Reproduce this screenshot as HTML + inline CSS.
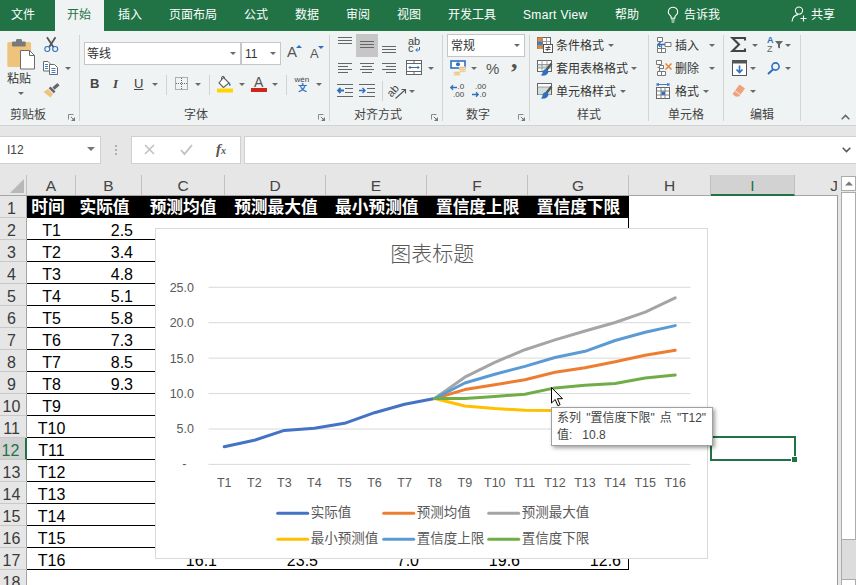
<!DOCTYPE html>
<html lang="zh-CN">
<head>
<meta charset="utf-8">
<title>Excel</title>
<style>
html,body{margin:0;padding:0;}
body{width:856px;height:585px;overflow:hidden;position:relative;background:#e6e6e6;font-family:"Liberation Sans","Noto Sans CJK SC",sans-serif;font-size:12px;color:#262626;}
.abs,.abs *{position:absolute;}
div{box-sizing:border-box;}
.t{position:absolute;white-space:nowrap;line-height:16px;height:16px;}
.c{transform:translateX(-50%);}
#tabs{position:absolute;left:0;top:0;width:856px;height:31px;background:#217346;}
#tabs .t{color:#fff;font-size:12px;top:7px;}
#acttab{position:absolute;left:55px;top:0;width:49px;height:31px;background:#f0f3f3;}
#ribbon{position:absolute;left:0;top:31px;width:856px;height:94px;background:#f0f3f3;}
#ribline{position:absolute;left:0;top:125px;width:856px;height:1px;background:#d2d2d2;}
.gsep{position:absolute;top:35px;width:1px;height:86px;background:#d4d4d4;}
.ssep{position:absolute;width:1px;height:20px;background:#d4d4d4;}
.glabel{position:absolute;top:107px;font-size:12px;line-height:16px;color:#444;transform:translateX(-50%);white-space:nowrap;}
.arr{position:absolute;width:0;height:0;border-left:3px solid transparent;border-right:3px solid transparent;border-top:3px solid #555;}
.box{position:absolute;background:#fff;border:1px solid #c6c6c6;}
.rt{position:absolute;font-size:12px;line-height:16px;white-space:nowrap;color:#333;}
svg{position:absolute;overflow:visible;}
.hdr{position:absolute;top:175px;height:20px;font-size:15.500px;line-height:22px;text-align:center;color:#444;border-right:1px solid #c0c0c0;}
.rh{position:absolute;left:0;width:27px;height:22px;font-size:16px;line-height:25px;text-align:center;padding-right:4px;color:#3a3a3a;border-bottom:1px solid #c8c8c8;}
.cell{position:absolute;height:22px;font-size:16px;line-height:25px;color:#000;text-align:center;white-space:nowrap;}
.h1{color:#fff;font-weight:bold;font-size:16.700px;line-height:23px;}
.hl{position:absolute;left:27px;width:602px;height:1px;background:#000;}
</style>
</head>
<body>

<div id="tabs">
<div id="acttab"></div>
<span class="t" style="left:11px">文件</span>
<span class="t" style="left:67px;color:#217346">开始</span>
<span class="t" style="left:118px">插入</span>
<span class="t" style="left:169px">页面布局</span>
<span class="t" style="left:244px">公式</span>
<span class="t" style="left:295px">数据</span>
<span class="t" style="left:346px">审阅</span>
<span class="t" style="left:397px">视图</span>
<span class="t" style="left:448px">开发工具</span>
<span class="t" style="letter-spacing:.35px;left:523px">Smart View</span>
<span class="t" style="left:615px">帮助</span>
<span class="t" style="left:684px">告诉我</span>
<span class="t" style="left:811px">共享</span>
<svg style="left:666px;top:6px" width="14" height="18" viewBox="0 0 14 18"><path d="M7 1.2a4.6 4.6 0 0 0-2.6 8.4c.5.5.8 1.2.8 2v.6h3.6v-.6c0-.8.3-1.5.8-2A4.6 4.6 0 0 0 7 1.200z" fill="none" stroke="#fff" stroke-width="1.1"/><path d="M5.2 14h3.600M5.600 16h2.800" stroke="#fff" stroke-width="1.100"/></svg>
<svg style="left:791px;top:6px" width="17" height="17" viewBox="0 0 17 17"><circle cx="8" cy="4.600" r="3.600" fill="none" stroke="#fff" stroke-width="1.100"/><path d="M1 15.500c.4-4 3-6.500 6-6.900" fill="none" stroke="#fff" stroke-width="1.100"/><path d="M12.500 9.500v6M9.500 12.500h6" stroke="#fff" stroke-width="1.100"/></svg>
</div>
<div id="ribbon"></div><div id="ribline"></div>
<div class="gsep" style="left:79px"></div>
<div class="gsep" style="left:329px"></div>
<div class="gsep" style="left:442px"></div>
<div class="gsep" style="left:529px"></div>
<div class="gsep" style="left:648px"></div>
<div class="gsep" style="left:723px"></div>
<div class="gsep" style="left:800px"></div>
<div class="glabel" style="left:28px">剪贴板</div>
<div class="glabel" style="left:196px">字体</div>
<div class="glabel" style="left:378px">对齐方式</div>
<div class="glabel" style="left:478px">数字</div>
<div class="glabel" style="left:589px">样式</div>
<div class="glabel" style="left:686px">单元格</div>
<div class="glabel" style="left:762px">编辑</div>
<svg style="left:68px;top:114px" width="8" height="8" viewBox="0 0 8 8"><path d="M0.500 5.500V0.500H5.500" fill="none" stroke="#8a8a8a" stroke-width="1"/><path d="M2.800 2.800L6 6" fill="none" stroke="#777" stroke-width="1"/><path d="M7 3V7H3z" fill="#777"/></svg>
<svg style="left:318px;top:114px" width="8" height="8" viewBox="0 0 8 8"><path d="M0.500 5.500V0.500H5.500" fill="none" stroke="#8a8a8a" stroke-width="1"/><path d="M2.800 2.800L6 6" fill="none" stroke="#777" stroke-width="1"/><path d="M7 3V7H3z" fill="#777"/></svg>
<svg style="left:431px;top:114px" width="8" height="8" viewBox="0 0 8 8"><path d="M0.500 5.500V0.500H5.500" fill="none" stroke="#8a8a8a" stroke-width="1"/><path d="M2.800 2.800L6 6" fill="none" stroke="#777" stroke-width="1"/><path d="M7 3V7H3z" fill="#777"/></svg>
<svg style="left:518px;top:114px" width="8" height="8" viewBox="0 0 8 8"><path d="M0.500 5.500V0.500H5.500" fill="none" stroke="#8a8a8a" stroke-width="1"/><path d="M2.800 2.800L6 6" fill="none" stroke="#777" stroke-width="1"/><path d="M7 3V7H3z" fill="#777"/></svg>
<svg style="left:841px;top:114px" width="9" height="6" viewBox="0 0 9 6"><path d="M0.700 5.200L4.500 1.400L8.300 5.200" fill="none" stroke="#666" stroke-width="1.500"/></svg>
<svg style="left:7px;top:39px" width="28" height="31" viewBox="0 0 28 31"><rect x="0.300" y="3" width="23.800" height="25" rx="1.500" fill="#eec47c"/><rect x="5" y="2.500" width="13.700" height="5" rx="1" fill="#7a7a7a"/><rect x="9" y="0" width="6" height="4" rx="1.200" fill="#7a7a7a"/><path d="M13.500 11.500h9l5 5v13.500h-14z" fill="#fff" stroke="#6b6b6b" stroke-width="1"/><path d="M22.500 11.500v5h5" fill="none" stroke="#6b6b6b" stroke-width="1"/></svg>
<div class="rt" style="left:7px;top:71px">粘贴</div>
<div class="arr" style="left:17.5px;top:91.5px;border-top-color:#6a6a6a"></div>
<svg style="left:44px;top:37px" width="15" height="16" viewBox="0 0 15 16"><path d="M3 0.300L9.300 10M11.500 0.300L5.200 10" stroke="#555" stroke-width="1.800" fill="none"/><circle cx="3.300" cy="12" r="2.500" fill="none" stroke="#2e6fc0" stroke-width="1.100"/><circle cx="11.200" cy="12" r="2.500" fill="none" stroke="#2e6fc0" stroke-width="1.100"/></svg>
<svg style="left:43px;top:61px" width="16" height="14" viewBox="0 0 16 14"><path d="M0.500 0.500h4.500l2 2v7.500h-6.500z" fill="#fff" stroke="#6a6a6a"/><path d="M2 3.500h3M2 5.500h3M2 7.500h3" stroke="#2e6fc0" stroke-width=".9"/><path d="M6.500 3.500h5l3 3v7h-8z" fill="#fff" stroke="#6a6a6a"/><path d="M8.500 7.500h4M8.500 9.500h4M8.500 11.500h4" stroke="#2e6fc0" stroke-width=".9"/></svg>
<div class="arr" style="left:64.5px;top:66.5px;border-top-color:#6a6a6a"></div>
<svg style="left:43px;top:83px" width="17" height="15" viewBox="0 0 17 15"><path d="M10.500 5.500L15.500 1.300" stroke="#666" stroke-width="3.200"/><path d="M7.500 3.500l5 5-1.800 1.800-5-5z" fill="#666"/><path d="M5 6l5 5-2.500 3.500L0.500 9z" fill="#eec47c"/></svg>
<div class="box" style="left:84px;top:42px;width:157px;height:23px"></div>
<div class="box" style="left:241px;top:42px;width:40px;height:23px"></div>
<div class="rt" style="left:87px;top:46px">等线</div>
<div class="arr" style="left:230px;top:52px;border-top-color:#6a6a6a"></div>
<div class="rt" style="left:245px;top:46px">11</div>
<div class="arr" style="left:270px;top:52px;border-top-color:#6a6a6a"></div>
<div class="rt" style="left:287px;top:44px;font-size:15px;color:#555">A</div>
<div class="arr" style="left:296px;top:45px;border-top:none;border-bottom:3px solid #2e6fc0"></div>
<div class="rt" style="left:310px;top:46px;font-size:13px;color:#555">A</div>
<div class="arr" style="left:318px;top:46px;border-top-color:#2e6fc0"></div>
<div class="rt" style="left:90px;top:76px;font-size:13px;font-weight:bold;color:#444">B</div>
<div class="rt" style="left:113px;top:76px;font-size:13px;font-style:italic;font-family:'Liberation Serif',serif;font-weight:bold;color:#444">I</div>
<div class="rt" style="left:134px;top:76px;font-size:13px;text-decoration:underline;color:#444">U</div>
<div class="arr" style="left:152px;top:83px;border-top-color:#6a6a6a"></div>
<div class="ssep" style="left:166px;top:75px"></div>
<svg style="left:175px;top:77px" width="13" height="13" viewBox="0 0 13 13"><rect x="0.500" y="0.500" width="12" height="12" fill="none" stroke="#6a6a6a" stroke-dasharray="1 1"/><path d="M6.500 1v11M1 6.500h11" stroke="#6a6a6a" stroke-dasharray="1 1"/></svg>
<div class="arr" style="left:195px;top:83px;border-top-color:#6a6a6a"></div>
<div class="ssep" style="left:209px;top:75px"></div>
<svg style="left:217px;top:76px" width="17" height="17" viewBox="0 0 17 17"><path d="M6.500 1.500L12 7 6.500 11.500 2 7z" fill="#fff" stroke="#5f5f5f" stroke-width="1.100"/><path d="M4.500 4V1.800a1.500 1.500 0 0 1 3 0V3" fill="none" stroke="#5f5f5f" stroke-width="1"/><path d="M12.300 6.500c1.500 1.500 1.800 2.800.6 3.600-1.100-.4-1.100-1.900-.6-3.600z" fill="#2e6fc0"/><rect x="0" y="12.500" width="16" height="4" fill="#ffd400"/></svg>
<div class="arr" style="left:238.5px;top:83px;border-top-color:#6a6a6a"></div>
<div class="rt" style="left:254px;top:74px;font-size:14px;color:#555">A</div>
<div style="position:absolute;left:251px;top:88px;width:16px;height:4px;background:#d0241b"></div>
<div class="arr" style="left:272px;top:83px;border-top-color:#6a6a6a"></div>
<div class="ssep" style="left:286px;top:75px"></div>
<div class="rt" style="left:294.500px;top:74.500px;font-size:8px;line-height:10px;height:10px;color:#444">wén</div>
<div class="rt" style="left:298px;top:82.500px;font-size:9px;line-height:10px;height:10px;color:#2e6fc0;font-weight:bold">文</div>
<div class="arr" style="left:315.5px;top:83px;border-top-color:#6a6a6a"></div>
<div style="position:absolute;left:356px;top:34px;width:22px;height:23px;background:#c6c6c6"></div>
<svg style="left:338px;top:37px" width="14" height="9" viewBox="0 0 14 9"><rect x="0" y="0" width="14" height="1" fill="#666"/><rect x="0" y="3" width="14" height="1" fill="#666"/><rect x="0" y="6" width="14" height="1" fill="#666"/></svg>
<svg style="left:360px;top:41px" width="14" height="9" viewBox="0 0 14 9"><rect x="0" y="0" width="14" height="1" fill="#666"/><rect x="0" y="3" width="14" height="1" fill="#666"/><rect x="0" y="6" width="14" height="1" fill="#666"/></svg>
<svg style="left:382px;top:46px" width="14" height="9" viewBox="0 0 14 9"><rect x="0" y="0" width="14" height="1" fill="#666"/><rect x="0" y="3" width="14" height="1" fill="#666"/><rect x="0" y="6" width="14" height="1" fill="#666"/></svg>
<svg style="left:338px;top:63px" width="14" height="12" viewBox="0 0 14 12"><rect x="0" y="0" width="14" height="1" fill="#666"/><rect x="0" y="3" width="10" height="1" fill="#666"/><rect x="0" y="6" width="14" height="1" fill="#666"/><rect x="0" y="9" width="10" height="1" fill="#666"/></svg>
<svg style="left:360px;top:63px" width="14" height="12" viewBox="0 0 14 12"><rect x="0" y="0" width="14" height="1" fill="#666"/><rect x="2" y="3" width="10" height="1" fill="#666"/><rect x="0" y="6" width="14" height="1" fill="#666"/><rect x="2" y="9" width="10" height="1" fill="#666"/></svg>
<svg style="left:382px;top:63px" width="14" height="12" viewBox="0 0 14 12"><rect x="0" y="0" width="14" height="1" fill="#666"/><rect x="4" y="3" width="10" height="1" fill="#666"/><rect x="0" y="6" width="14" height="1" fill="#666"/><rect x="4" y="9" width="10" height="1" fill="#666"/></svg>
<div class="rt" style="left:408px;top:36px;font-size:11px;line-height:11px;height:11px;color:#444">ab</div>
<div class="rt" style="left:408px;top:43px;font-size:11px;line-height:11px;height:11px;color:#444">c</div>
<svg style="left:415px;top:47px" width="5" height="5" viewBox="0 0 5 5"><path d="M4.500 0v3H1M2.300 1.300L0.800 3 2.300 4.700" fill="none" stroke="#2e6fc0" stroke-width="1"/></svg>
<svg style="left:406px;top:60px" width="16" height="15" viewBox="0 0 16 15"><rect x="0.500" y="0.500" width="15" height="14" fill="#fff" stroke="#666"/><path d="M0.500 3.500h15M0.500 11.500h15M8 0.500V3.500M8 11.500v3" stroke="#666" fill="none"/><path d="M3 7.500h10M4.500 6L3 7.500 4.500 9M11.500 6l1.500 1.500L11.500 9" stroke="#2e6fc0" fill="none" stroke-width="1"/></svg>
<div class="arr" style="left:427.5px;top:66.5px;border-top-color:#6a6a6a"></div>
<svg style="left:337px;top:84px" width="16" height="13" viewBox="0 0 16 13"><path d="M0 0.500h16M8 4.500h8M8 8.500h8M0 12.500h16" stroke="#666"/><path d="M7 6.500H1M3.500 4L1 6.500 3.500 9" stroke="#2e6fc0" stroke-width="1.800" fill="none"/></svg>
<svg style="left:359px;top:84px" width="16" height="13" viewBox="0 0 16 13"><path d="M0 0.500h16M8 4.500h8M8 8.500h8M0 12.500h16" stroke="#666"/><path d="M0 6.500H6M3.500 4L6 6.500 3.500 9" stroke="#2e6fc0" stroke-width="1.400" fill="none"/></svg>
<div class="ssep" style="left:382px;top:81px"></div>
<svg style="left:389px;top:84px" width="18" height="15" viewBox="0 0 18 15"><text x="-1" y="10" font-size="11" fill="#444" transform="rotate(-48 5 8)" font-family="Liberation Sans, sans-serif">ab</text><path d="M6.500 14.500L16 6M12.500 5.500h4v4" stroke="#555" fill="none" stroke-width="1.100"/></svg>
<div class="arr" style="left:409px;top:89.5px;border-top-color:#6a6a6a"></div>
<div class="box" style="left:447px;top:34px;width:78px;height:23px"></div>
<div class="rt" style="left:451px;top:38px">常规</div>
<div class="arr" style="left:514px;top:44px;border-top-color:#6a6a6a"></div>
<svg style="left:450px;top:60px" width="16" height="16" viewBox="0 0 16 16"><rect x="1" y="1" width="14" height="7" fill="#fff" stroke="#2e6fc0" stroke-width="1.600"/><circle cx="8" cy="4.300" r="2" fill="#2e6fc0"/><g fill="#eec47c" stroke="#f0f3f3" stroke-width=".5"><ellipse cx="12.500" cy="11" rx="3.500" ry="1.200"/><ellipse cx="12.500" cy="9.300" rx="3.500" ry="1.200"/><ellipse cx="12.500" cy="7.600" rx="3.500" ry="1.200"/><ellipse cx="7" cy="14.500" rx="3.500" ry="1.200"/><ellipse cx="7" cy="12.800" rx="3.500" ry="1.200"/></g></svg>
<div class="arr" style="left:471px;top:66.5px;border-top-color:#6a6a6a"></div>
<div class="rt" style="left:486px;top:60.500px;font-size:15px;color:#555">%</div>
<div class="rt" style="left:511px;top:52px;font-size:26px;color:#555;font-weight:bold;font-family:'Liberation Serif',serif">,</div>
<div class="rt" style="left:457.500px;top:83px;font-size:8px;line-height:8px;height:8px;color:#444">.0</div>
<div class="rt" style="left:453px;top:90.500px;font-size:8px;line-height:8px;height:8px;color:#444">.00</div>
<svg style="left:450px;top:85px" width="7" height="5" viewBox="0 0 7 5"><path d="M7 2.500H1M3 0.300L0.800 2.500 3 4.700" stroke="#2e6fc0" stroke-width="1.300" fill="none"/></svg>
<div class="rt" style="left:475px;top:83px;font-size:8px;line-height:8px;height:8px;color:#444">.00</div>
<div class="rt" style="left:479.500px;top:90.500px;font-size:8px;line-height:8px;height:8px;color:#444">.0</div>
<svg style="left:472px;top:92px" width="7" height="5" viewBox="0 0 7 5"><path d="M0 2.500H6M4 0.300L6.200 2.500 4 4.700" stroke="#2e6fc0" stroke-width="1.300" fill="none"/></svg>
<svg style="left:537px;top:37px" width="16" height="16" viewBox="0 0 16 16"><rect x="0.500" y="0.500" width="13" height="11" fill="#fff" stroke="#666"/><rect x="0.500" y="0.500" width="5.500" height="4" fill="#e08a3c"/><rect x="0.500" y="4.500" width="5.500" height="3.500" fill="#3f78c4"/><rect x="0.500" y="8" width="5.500" height="4" fill="#e08a3c"/><path d="M5 0.500v11M0.500 4.500h13M0.500 8h13M9.500 0.500v11" stroke="#888" stroke-width=".8"/><rect x="6.500" y="7.500" width="9" height="8" fill="#fff" stroke="#555"/><path d="M8.500 10.500h5M8.500 12.500h5M12 9L10 14" stroke="#444" stroke-width=".9"/></svg>
<div class="rt" style="left:556px;top:38px">条件格式</div>
<div class="arr" style="left:607.5px;top:44px;border-top-color:#6a6a6a"></div>
<svg style="left:537px;top:60px" width="16" height="16" viewBox="0 0 16 16"><rect x="0.500" y="0.500" width="14" height="11" fill="#fff" stroke="#666"/><rect x="1" y="4.500" width="13" height="3.500" fill="#cfe0df"/><path d="M5 0.500v11M10 0.500v11M0.500 4.500h14M0.500 8h14" stroke="#888" stroke-width=".8"/><path d="M14.500 3.500L9 10.500" stroke="#555" stroke-width="2.400"/><path d="M10 9.500c-2.500-.8-4.500 .8-4.500 3 0 1.200-1 2.500-2 2.800 3.500 1.200 8-.3 8-4.300z" fill="#2e6fc0"/></svg>
<div class="rt" style="left:556px;top:61px">套用表格格式</div>
<div class="arr" style="left:631px;top:66.5px;border-top-color:#6a6a6a"></div>
<svg style="left:537px;top:83px" width="16" height="16" viewBox="0 0 16 16"><rect x="0.500" y="0.500" width="14" height="11" fill="#fff" stroke="#666"/><rect x="1" y="4" width="13" height="7.500" fill="#cfe0df"/><path d="M0.500 4h14" stroke="#888" stroke-width=".8"/><path d="M14.500 3.500L9 10.500" stroke="#555" stroke-width="2.400"/><path d="M10 9.500c-2.500-.8-4.500 .8-4.500 3 0 1.200-1 2.500-2 2.800 3.500 1.200 8-.3 8-4.300z" fill="#2e6fc0"/></svg>
<div class="rt" style="left:556px;top:84px">单元格样式</div>
<div class="arr" style="left:619.5px;top:89.5px;border-top-color:#6a6a6a"></div>
<svg style="left:656px;top:37px" width="16" height="16" viewBox="0 0 16 16"><path d="M1.500 0.500h5v4h-5zM1.500 7.500h4v4h-4zM1.500 11.500h4v4h-4zM5.500 11.500h4v4h-4zM9 5.500h6v4h-6z" fill="#fff" stroke="#777"/><path d="M9 7.500H2M4.500 5L2 7.500 4.500 10" stroke="#2e6fc0" stroke-width="1.400" fill="none"/></svg>
<div class="rt" style="left:675px;top:38px">插入</div>
<div class="arr" style="left:708.5px;top:44px;border-top-color:#6a6a6a"></div>
<svg style="left:656px;top:60px" width="16" height="16" viewBox="0 0 16 16"><path d="M0.500 0.500h5v4h-5zM3.500 5.500h4v3h-4zM1.500 11.500h4v4h-4zM5.500 11.500h4v4h-4zM1.500 7.500h2v4" fill="#fff" stroke="#777"/><path d="M9.500 3.500l6 6M15.500 3.500l-6 6" stroke="#e8833a" stroke-width="1.500"/></svg>
<div class="rt" style="left:675px;top:61px">删除</div>
<div class="arr" style="left:708.5px;top:66.5px;border-top-color:#6a6a6a"></div>
<svg style="left:656px;top:83px" width="16" height="16" viewBox="0 0 16 16"><path d="M1 1.500h12M1 0v3M13 0v3M3 0.300L1.200 1.500 3 2.700M11 0.300l1.800 1.200L11 2.700" stroke="#2e6fc0" stroke-width=".9" fill="none"/><rect x="0.500" y="4.500" width="13" height="11" fill="#fff" stroke="#666"/><path d="M0.500 8h13M0.500 12h13M5 4.500v11M9 4.500v11" stroke="#777" stroke-width=".9"/><rect x="5.500" y="8.500" width="3.500" height="3.500" fill="#2e6fc0"/></svg>
<div class="rt" style="left:675px;top:84px">格式</div>
<div class="arr" style="left:703px;top:89.5px;border-top-color:#6a6a6a"></div>
<svg style="left:731px;top:37px" width="15" height="15" viewBox="0 0 15 15"><path d="M14 3.500V1H1.500L8 7.500 1.500 14H14v-2.500" fill="none" stroke="#444" stroke-width="2.100"/></svg>
<div class="arr" style="left:752px;top:44px;border-top-color:#6a6a6a"></div>
<div class="rt" style="left:767px;top:36px;font-size:9px;line-height:9px;height:9px;color:#2e6fc0;font-weight:bold">A</div>
<div class="rt" style="left:767px;top:45px;font-size:9px;line-height:9px;height:9px;color:#666">Z</div>
<svg style="left:775px;top:41px" width="8" height="8" viewBox="0 0 8 8"><path d="M0 0h8L5 3.500V7.500L3 6.500V3.500z" fill="#666"/></svg>
<div class="arr" style="left:785px;top:44px;border-top-color:#6a6a6a"></div>
<svg style="left:732px;top:60px" width="15" height="16" viewBox="0 0 15 16"><rect x="0.500" y="0.500" width="14" height="15" fill="#fff" stroke="#555"/><rect x="0.500" y="0.500" width="14" height="3" fill="#555"/><path d="M7.500 5.500v7M4.500 9.500l3 3 3-3" stroke="#2e6fc0" stroke-width="1.600" fill="none"/></svg>
<div class="arr" style="left:750px;top:66.5px;border-top-color:#6a6a6a"></div>
<svg style="left:767px;top:62px" width="14" height="13" viewBox="0 0 14 13"><circle cx="8.500" cy="4.500" r="3.600" fill="none" stroke="#2e6fc0" stroke-width="1.600"/><path d="M6 7.500L1 12" stroke="#2e6fc0" stroke-width="2"/></svg>
<div class="arr" style="left:785px;top:66.5px;border-top-color:#6a6a6a"></div>
<svg style="left:732px;top:84px" width="14" height="13" viewBox="0 0 14 13"><path d="M7.500 0.500l5.500 4-6 8H3.500L0.500 10z" fill="#f0a07a"/><path d="M3 6.800l5.500 4" stroke="#f0f3f3" stroke-width="1"/></svg>
<div class="arr" style="left:750px;top:89.5px;border-top-color:#6a6a6a"></div>
<div class="box" style="left:-1px;top:136px;width:102px;height:28px;border-color:#d0d0d0"></div>
<div class="rt" style="left:7px;top:142px;color:#444">I12</div>
<div class="arr" style="left:86.500px;top:147px;border-left-width:4px;border-right-width:4px;border-top:4px solid #777"></div>
<div style="position:absolute;left:115px;top:145px;width:2px;height:2px;background:#b0b0b0"></div>
<div style="position:absolute;left:115px;top:149px;width:2px;height:2px;background:#b0b0b0"></div>
<div style="position:absolute;left:115px;top:153px;width:2px;height:2px;background:#b0b0b0"></div>
<div class="box" style="left:131px;top:136px;width:110px;height:28px;border-color:#d0d0d0"></div>
<svg style="left:144px;top:144px" width="11" height="11" viewBox="0 0 11 11"><path d="M1 1l9 9M10 1l-9 9" stroke="#c0c0c0" stroke-width="1.500"/></svg>
<svg style="left:180px;top:144px" width="13" height="11" viewBox="0 0 13 11"><path d="M1 6l3.500 4L12 1" stroke="#c0c0c0" stroke-width="1.800" fill="none"/></svg>
<div class="rt" style="left:216px;top:141px;font-family:'Liberation Serif',serif;font-style:italic;font-weight:bold;font-size:15px;color:#555">f<span style="font-size:10px">x</span></div>
<div class="box" style="left:244px;top:136px;width:613px;height:28px;border-color:#d0d0d0"></div>
<svg style="left:842px;top:147px" width="9" height="6" viewBox="0 0 9 6"><path d="M0.700 0.800L4.500 4.600 8.300 0.800" fill="none" stroke="#555" stroke-width="1.500"/></svg>
<div style="position:absolute;left:0;top:196px;width:838px;height:389px;background:#fff"></div>
<div style="position:absolute;left:0;top:195px;width:838px;height:1px;background:#a6a6a6"></div>
<div style="position:absolute;left:837px;top:195px;width:1px;height:390px;background:#999"></div>
<div class="hdr" style="left:0;width:27px"></div>
<svg style="left:10px;top:179px" width="14" height="14" viewBox="0 0 14 14"><path d="M14 0V14H0z" fill="#b8b8b8"/></svg>
<div class="hdr" style="left:27px;width:49px">A</div>
<div class="hdr" style="left:76px;width:66px">B</div>
<div class="hdr" style="left:142px;width:83px">C</div>
<div class="hdr" style="left:225px;width:101px">D</div>
<div class="hdr" style="left:326px;width:101px">E</div>
<div class="hdr" style="left:427px;width:101px">F</div>
<div class="hdr" style="left:528px;width:101px">G</div>
<div class="hdr" style="left:629px;width:82px">H</div>
<div class="hdr" style="left:711px;width:84px;background:#d2d2d2;color:#217346;border-bottom:2px solid #217346;height:21px;top:175px">I</div>
<div style="position:absolute;left:795px;top:175px;width:42px;height:20px;overflow:hidden"><div class="hdr" style="left:0;top:0;width:78px;border:none">J</div></div>
<div style="position:absolute;left:0;top:196px;width:27px;height:389px;background:#e6e6e6;border-right:1px solid #a6a6a6"></div>
<div class="rh" style="top:196px">1</div>
<div class="rh" style="top:218px">2</div>
<div class="rh" style="top:240px">3</div>
<div class="rh" style="top:262px">4</div>
<div class="rh" style="top:284px">5</div>
<div class="rh" style="top:306px">6</div>
<div class="rh" style="top:328px">7</div>
<div class="rh" style="top:350px">8</div>
<div class="rh" style="top:372px">9</div>
<div class="rh" style="top:394px">10</div>
<div class="rh" style="top:416px">11</div>
<div class="rh" style="top:438px;background:#d2d2d2;color:#217346;border-right:2px solid #217346">12</div>
<div class="rh" style="top:460px">13</div>
<div class="rh" style="top:482px">14</div>
<div class="rh" style="top:504px">15</div>
<div class="rh" style="top:526px">16</div>
<div class="rh" style="top:548px">17</div>
<div class="rh" style="top:570px">18</div>
<div style="position:absolute;left:27px;top:196px;width:602px;height:22px;background:#000"></div>
<div class="cell h1" style="left:47.9px;top:196px;transform:translateX(-50%)">时间</div>
<div class="cell h1" style="left:104.5px;top:196px;transform:translateX(-50%)">实际值</div>
<div class="cell h1" style="left:183px;top:196px;transform:translateX(-50%)">预测均值</div>
<div class="cell h1" style="left:275.9px;top:196px;transform:translateX(-50%)">预测最大值</div>
<div class="cell h1" style="left:376.8px;top:196px;transform:translateX(-50%)">最小预测值</div>
<div class="cell h1" style="left:477.7px;top:196px;transform:translateX(-50%)">置信度上限</div>
<div class="cell h1" style="left:578.5px;top:196px;transform:translateX(-50%)">置信度下限</div>
<div class="cell" style="left:27px;top:218px;width:49px">T1</div>
<div class="cell" style="left:76px;top:218px;width:66px;text-align:right;padding-right:9px">2.5</div>
<div class="cell" style="left:27px;top:240px;width:49px">T2</div>
<div class="cell" style="left:76px;top:240px;width:66px;text-align:right;padding-right:9px">3.4</div>
<div class="cell" style="left:27px;top:262px;width:49px">T3</div>
<div class="cell" style="left:76px;top:262px;width:66px;text-align:right;padding-right:9px">4.8</div>
<div class="cell" style="left:27px;top:284px;width:49px">T4</div>
<div class="cell" style="left:76px;top:284px;width:66px;text-align:right;padding-right:9px">5.1</div>
<div class="cell" style="left:27px;top:306px;width:49px">T5</div>
<div class="cell" style="left:76px;top:306px;width:66px;text-align:right;padding-right:9px">5.8</div>
<div class="cell" style="left:27px;top:328px;width:49px">T6</div>
<div class="cell" style="left:76px;top:328px;width:66px;text-align:right;padding-right:9px">7.3</div>
<div class="cell" style="left:27px;top:350px;width:49px">T7</div>
<div class="cell" style="left:76px;top:350px;width:66px;text-align:right;padding-right:9px">8.5</div>
<div class="cell" style="left:27px;top:372px;width:49px">T8</div>
<div class="cell" style="left:76px;top:372px;width:66px;text-align:right;padding-right:9px">9.3</div>
<div class="cell" style="left:27px;top:394px;width:49px">T9</div>
<div class="cell" style="left:27px;top:416px;width:49px">T10</div>
<div class="cell" style="left:27px;top:438px;width:49px">T11</div>
<div class="cell" style="left:27px;top:460px;width:49px">T12</div>
<div class="cell" style="left:27px;top:482px;width:49px">T13</div>
<div class="cell" style="left:27px;top:504px;width:49px">T14</div>
<div class="cell" style="left:27px;top:526px;width:49px">T15</div>
<div class="cell" style="left:27px;top:548px;width:49px">T16</div>
<div class="cell" style="left:142px;top:548px;width:83px;text-align:right;padding-right:8px">16.1</div>
<div class="cell" style="left:225px;top:548px;width:101px;text-align:right;padding-right:8px">23.5</div>
<div class="cell" style="left:326px;top:548px;width:101px;text-align:right;padding-right:8px">7.0</div>
<div class="cell" style="left:427px;top:548px;width:101px;text-align:right;padding-right:8px">19.6</div>
<div class="cell" style="left:528px;top:548px;width:101px;text-align:right;padding-right:8px">12.6</div>
<div class="hl" style="top:239px"></div>
<div class="hl" style="top:261px"></div>
<div class="hl" style="top:283px"></div>
<div class="hl" style="top:305px"></div>
<div class="hl" style="top:327px"></div>
<div class="hl" style="top:349px"></div>
<div class="hl" style="top:371px"></div>
<div class="hl" style="top:393px"></div>
<div class="hl" style="top:415px"></div>
<div class="hl" style="top:437px"></div>
<div class="hl" style="top:459px"></div>
<div class="hl" style="top:481px"></div>
<div class="hl" style="top:503px"></div>
<div class="hl" style="top:525px"></div>
<div class="hl" style="top:547px"></div>
<div class="hl" style="top:569px"></div>
<div style="position:absolute;left:628px;top:196px;width:1px;height:374px;background:#000"></div>
<div id="chart" style="position:absolute;left:155px;top:228px;width:553px;height:331px;background:#fff;border:1px solid #d9d9d9"></div>
<svg style="left:0;top:0" width="856" height="585" viewBox="0 0 856 585" font-family="Liberation Sans, Noto Sans CJK SC, sans-serif">
<text x="432.200" y="261.300" font-size="21" font-weight="300" fill="#595959" text-anchor="middle">图表标题</text>
<path d="M208.500 287.3H690.500" stroke="#d9d9d9" stroke-width="1"/>
<text x="194" y="291.7" font-size="12.500" fill="#595959" text-anchor="end">25.0</text>
<path d="M208.500 322.7H690.500" stroke="#d9d9d9" stroke-width="1"/>
<text x="194" y="327.1" font-size="12.500" fill="#595959" text-anchor="end">20.0</text>
<path d="M208.500 358.1H690.500" stroke="#d9d9d9" stroke-width="1"/>
<text x="194" y="362.5" font-size="12.500" fill="#595959" text-anchor="end">15.0</text>
<path d="M208.500 393.6H690.500" stroke="#d9d9d9" stroke-width="1"/>
<text x="194" y="398.0" font-size="12.500" fill="#595959" text-anchor="end">10.0</text>
<path d="M208.500 429.0H690.500" stroke="#d9d9d9" stroke-width="1"/>
<text x="194" y="433.4" font-size="12.500" fill="#595959" text-anchor="end">5.0</text>
<path d="M208.500 464.4H690.500" stroke="#d9d9d9" stroke-width="1"/>
<text x="186.500" y="468.4" font-size="12.500" fill="#595959" text-anchor="end">-</text>
<text x="224.2" y="486.700" font-size="12.500" fill="#595959" text-anchor="middle">T1</text>
<text x="254.3" y="486.700" font-size="12.500" fill="#595959" text-anchor="middle">T2</text>
<text x="284.3" y="486.700" font-size="12.500" fill="#595959" text-anchor="middle">T3</text>
<text x="314.4" y="486.700" font-size="12.500" fill="#595959" text-anchor="middle">T4</text>
<text x="344.5" y="486.700" font-size="12.500" fill="#595959" text-anchor="middle">T5</text>
<text x="374.5" y="486.700" font-size="12.500" fill="#595959" text-anchor="middle">T6</text>
<text x="404.6" y="486.700" font-size="12.500" fill="#595959" text-anchor="middle">T7</text>
<text x="434.7" y="486.700" font-size="12.500" fill="#595959" text-anchor="middle">T8</text>
<text x="464.8" y="486.700" font-size="12.500" fill="#595959" text-anchor="middle">T9</text>
<text x="494.8" y="486.700" font-size="12.500" fill="#595959" text-anchor="middle">T10</text>
<text x="524.9" y="486.700" font-size="12.500" fill="#595959" text-anchor="middle">T11</text>
<text x="555.0" y="486.700" font-size="12.500" fill="#595959" text-anchor="middle">T12</text>
<text x="585.0" y="486.700" font-size="12.500" fill="#595959" text-anchor="middle">T13</text>
<text x="615.1" y="486.700" font-size="12.500" fill="#595959" text-anchor="middle">T14</text>
<text x="645.2" y="486.700" font-size="12.500" fill="#595959" text-anchor="middle">T15</text>
<text x="675.2" y="486.700" font-size="12.500" fill="#595959" text-anchor="middle">T16</text>
<polyline points="224.2,446.7 254.3,440.3 284.3,430.4 314.4,428.3 344.5,423.3 374.5,412.7 404.6,404.2 434.7,398.5" fill="none" stroke="#4472c4" stroke-width="3" stroke-linejoin="round" stroke-linecap="round"/>
<polyline points="434.7,398.5 464.8,389.6 494.8,384.7 524.9,379.8 555.0,372.2 585.0,367.7 615.1,361.8 645.2,355.2 675.2,350.3" fill="none" stroke="#ed7d31" stroke-width="3" stroke-linejoin="round" stroke-linecap="round"/>
<polyline points="434.7,398.5 464.8,377.2 494.8,362.4 524.9,349.7 555.0,339.9 585.0,331.0 615.1,322.5 645.2,312.1 675.2,297.9" fill="none" stroke="#a5a5a5" stroke-width="3" stroke-linejoin="round" stroke-linecap="round"/>
<polyline points="434.7,398.5 464.8,406.0 494.8,408.6 524.9,410.2 555.0,410.6 585.0,411.3 615.1,412.7 645.2,414.1 675.2,414.8" fill="none" stroke="#ffc000" stroke-width="3" stroke-linejoin="round" stroke-linecap="round"/>
<polyline points="434.7,398.5 464.8,383.0 494.8,374.2 524.9,366.4 555.0,357.5 585.0,351.3 615.1,340.5 645.2,332.3 675.2,325.6" fill="none" stroke="#5b9bd5" stroke-width="3" stroke-linejoin="round" stroke-linecap="round"/>
<polyline points="434.7,398.5 464.8,398.4 494.8,396.5 524.9,394.2 555.0,387.9 585.0,385.3 615.1,383.4 645.2,378.1 675.2,375.1" fill="none" stroke="#70ad47" stroke-width="3" stroke-linejoin="round" stroke-linecap="round"/>
<path d="M277.7 513.2h30" stroke="#4472c4" stroke-width="3" stroke-linecap="round"/>
<text x="310.7" y="516.7" font-size="13.500" fill="#595959">实际值</text>
<path d="M383.7 513.2h30" stroke="#ed7d31" stroke-width="3" stroke-linecap="round"/>
<text x="416.7" y="516.7" font-size="13.500" fill="#595959">预测均值</text>
<path d="M488.7 513.2h30" stroke="#a5a5a5" stroke-width="3" stroke-linecap="round"/>
<text x="521.7" y="516.7" font-size="13.500" fill="#595959">预测最大值</text>
<path d="M277.7 539.2h30" stroke="#ffc000" stroke-width="3" stroke-linecap="round"/>
<text x="310.7" y="542.7" font-size="13.500" fill="#595959">最小预测值</text>
<path d="M383.7 539.2h30" stroke="#5b9bd5" stroke-width="3" stroke-linecap="round"/>
<text x="416.7" y="542.7" font-size="13.500" fill="#595959">置信度上限</text>
<path d="M488.7 539.2h30" stroke="#70ad47" stroke-width="3" stroke-linecap="round"/>
<text x="521.7" y="542.7" font-size="13.500" fill="#595959">置信度下限</text>
</svg>
<div style="position:absolute;left:710px;top:436px;width:86px;height:25px;border:2px solid #217346"></div>
<div style="position:absolute;left:791px;top:456px;width:7px;height:7px;background:#217346;border:1px solid #fff"></div>
<div style="position:absolute;left:551px;top:407px;width:162px;height:39px;background:#fff;border:1px solid #a0a0a0;box-shadow:2px 2px 4px rgba(0,0,0,.38)"></div>
<div class="rt" style="left:557px;top:409.500px;color:#444;word-spacing:1.800px">系列 "置信度下限" 点 "T12"</div>
<div class="rt" style="left:557px;top:426.500px;color:#444">值:&nbsp;&nbsp;&nbsp;10.8</div>
<svg style="left:551px;top:387px" width="13" height="20" viewBox="0 0 13 20"><path d="M0.500 0.500V16l3.700-3.500 2.600 6.200 2.300-1-2.600-6h5z" fill="#fff" stroke="#000" stroke-width="1"/></svg>
<div style="position:absolute;left:838px;top:175px;width:18px;height:410px;background:#e6e6e6"></div>
<div style="position:absolute;left:841px;top:176px;width:15px;height:15px;background:#fff;border:1px solid #ababab"></div>
<svg style="left:845px;top:181px" width="8" height="5" viewBox="0 0 8 5"><path d="M0 4.500L4 0.500 8 4.500z" fill="#777"/></svg>
<div style="position:absolute;left:841px;top:192px;width:16px;height:394px;background:#dcdcdc;border-left:1px solid #ababab"></div>
<div style="position:absolute;left:841px;top:192px;width:15px;height:348px;background:#fff;border:1px solid #ababab"></div>
<div style="position:absolute;left:841px;top:579px;width:15px;height:15px;background:#fff;border:1px solid #ababab"></div>
</body></html>
